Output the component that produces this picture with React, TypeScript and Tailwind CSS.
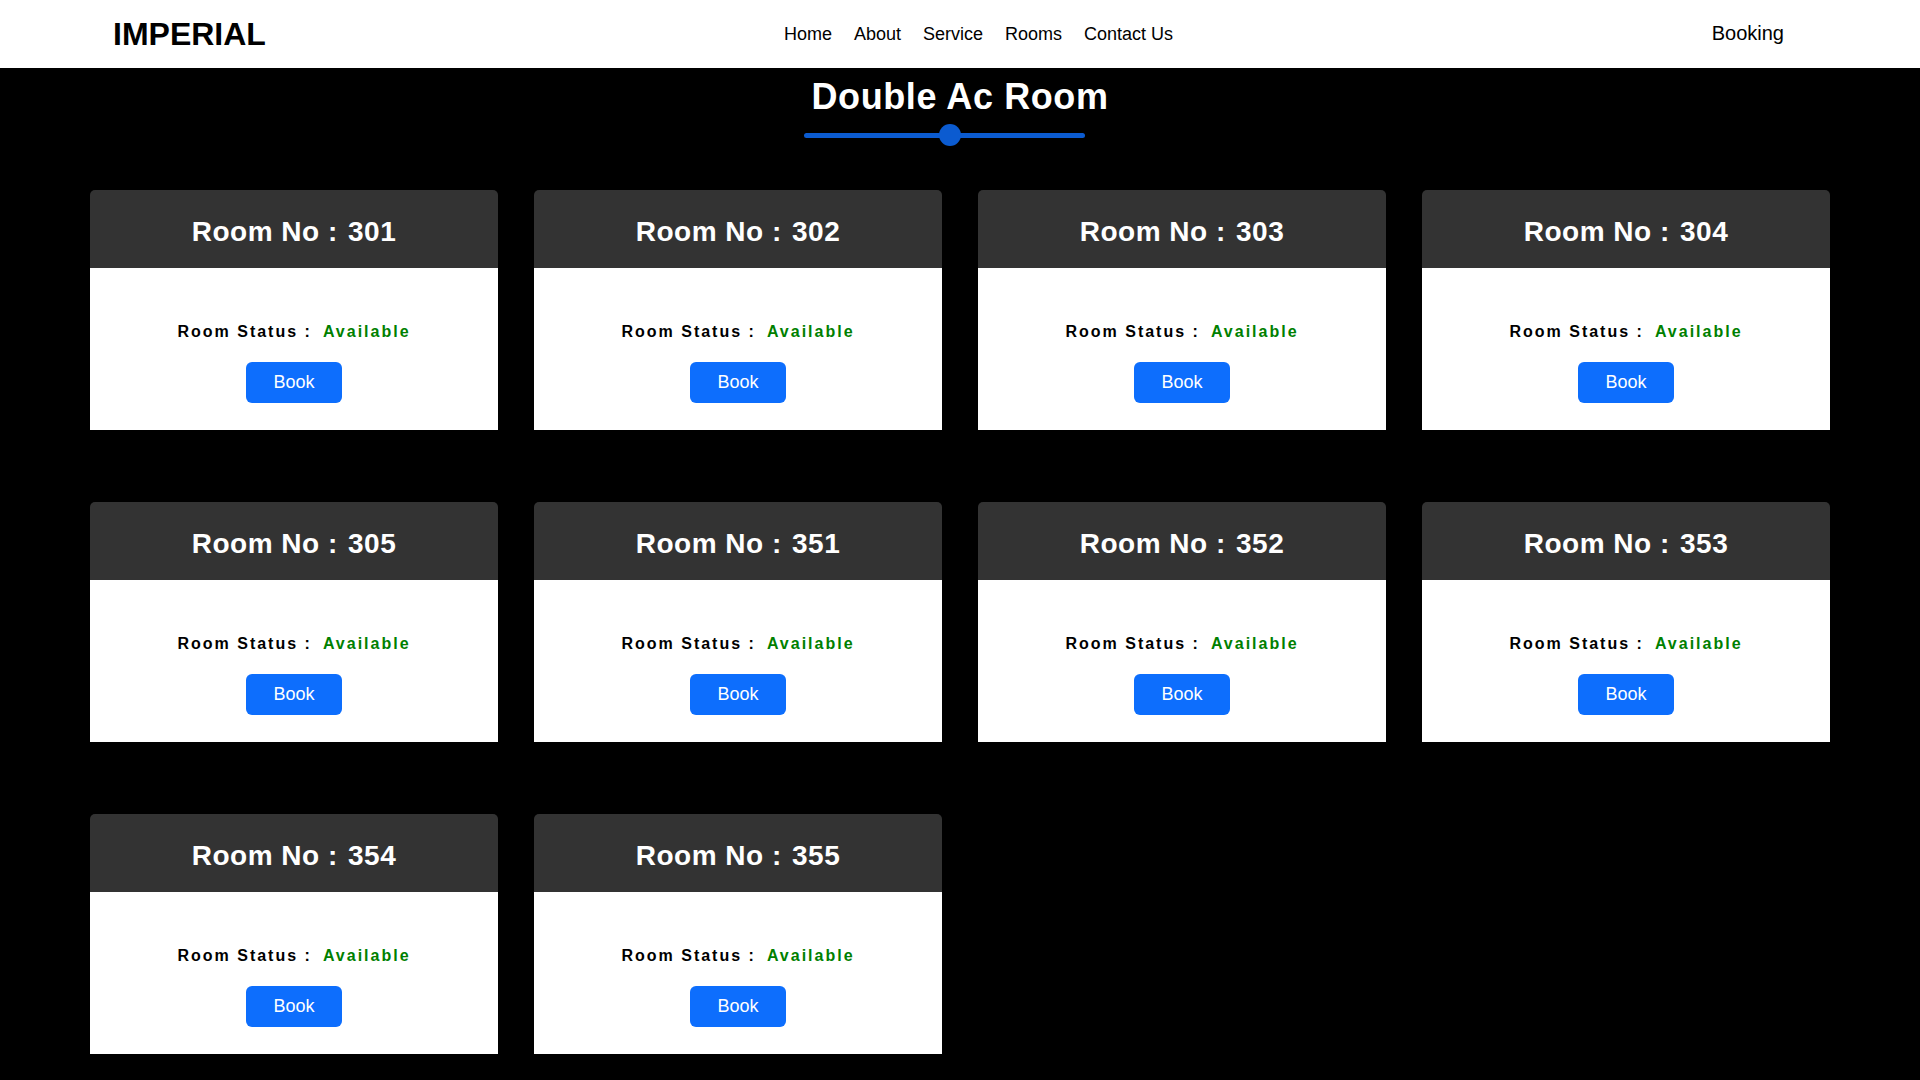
import React from "react";

const rooms = ["301", "302", "303", "304", "305", "351", "352", "353", "354", "355"];

function RoomCard({ no }: { no: string }) {
  return (
    <div className="w-[408px] h-[240px] flex flex-col">
      <div className="h-[78px] bg-[#333333] rounded-t-[5px] pt-[26px] text-center">
        <div className="text-[28px] leading-[32px] font-bold text-white tracking-[0.5px]">
          Room No : <span className="ml-[2px]">{no}</span>
        </div>
      </div>
      <div className="flex-1 bg-white flex flex-col items-center pt-[52px]">
        <div className="text-[16px] leading-[24px] font-bold tracking-[2px] text-black">
          <span>Room Status :</span>
          <span className="ml-[11px] text-[#008000]">Available</span>
        </div>
        <button className="mt-[18px] w-[96px] h-[41px] rounded-[6px] bg-[#0d6efd] text-white text-[18px] leading-[27px]">
          Book
        </button>
      </div>
    </div>
  );
}

export default function App() {
  return (
    <div
      className="min-h-screen bg-black"
      style={{ fontFamily: '"Liberation Sans", Arial, sans-serif' }}
    >
      <nav className="h-[68px] bg-white flex items-center pl-[113px]">
        <div className="text-[32px] leading-[38px] font-bold text-black">IMPERIAL</div>
        <div className="ml-[518px] flex items-center gap-[22px] text-[18px] leading-[27px] text-black">
          <a>Home</a>
          <a>About</a>
          <a>Service</a>
          <a>Rooms</a>
          <a>Contact Us</a>
        </div>
        <div className="ml-auto mr-[136px] text-[20px] leading-[30px] text-black pb-[2px]">Booking</div>
      </nav>

      <div className="flex flex-col items-center">
        <h1 className="mt-[9px] text-[36px] leading-[40px] font-bold text-white tracking-[0.6px]">
          Double Ac Room
        </h1>
        <div className="mt-[7px] mr-[32px] relative w-[281px] h-[22px] flex items-center">
          <div className="w-full h-[5px] rounded-full bg-[#0b5bd0]" />
          <div className="absolute left-[135px] top-0 w-[22px] h-[22px] rounded-full bg-[#0b5bd0]" />
        </div>
      </div>

      <div className="mt-[44px] mx-auto w-[1740px] grid grid-cols-4 gap-x-[36px] gap-y-[72px] pb-[26px]">
        {rooms.map((r) => (
          <RoomCard key={r} no={r} />
        ))}
      </div>
    </div>
  );
}
